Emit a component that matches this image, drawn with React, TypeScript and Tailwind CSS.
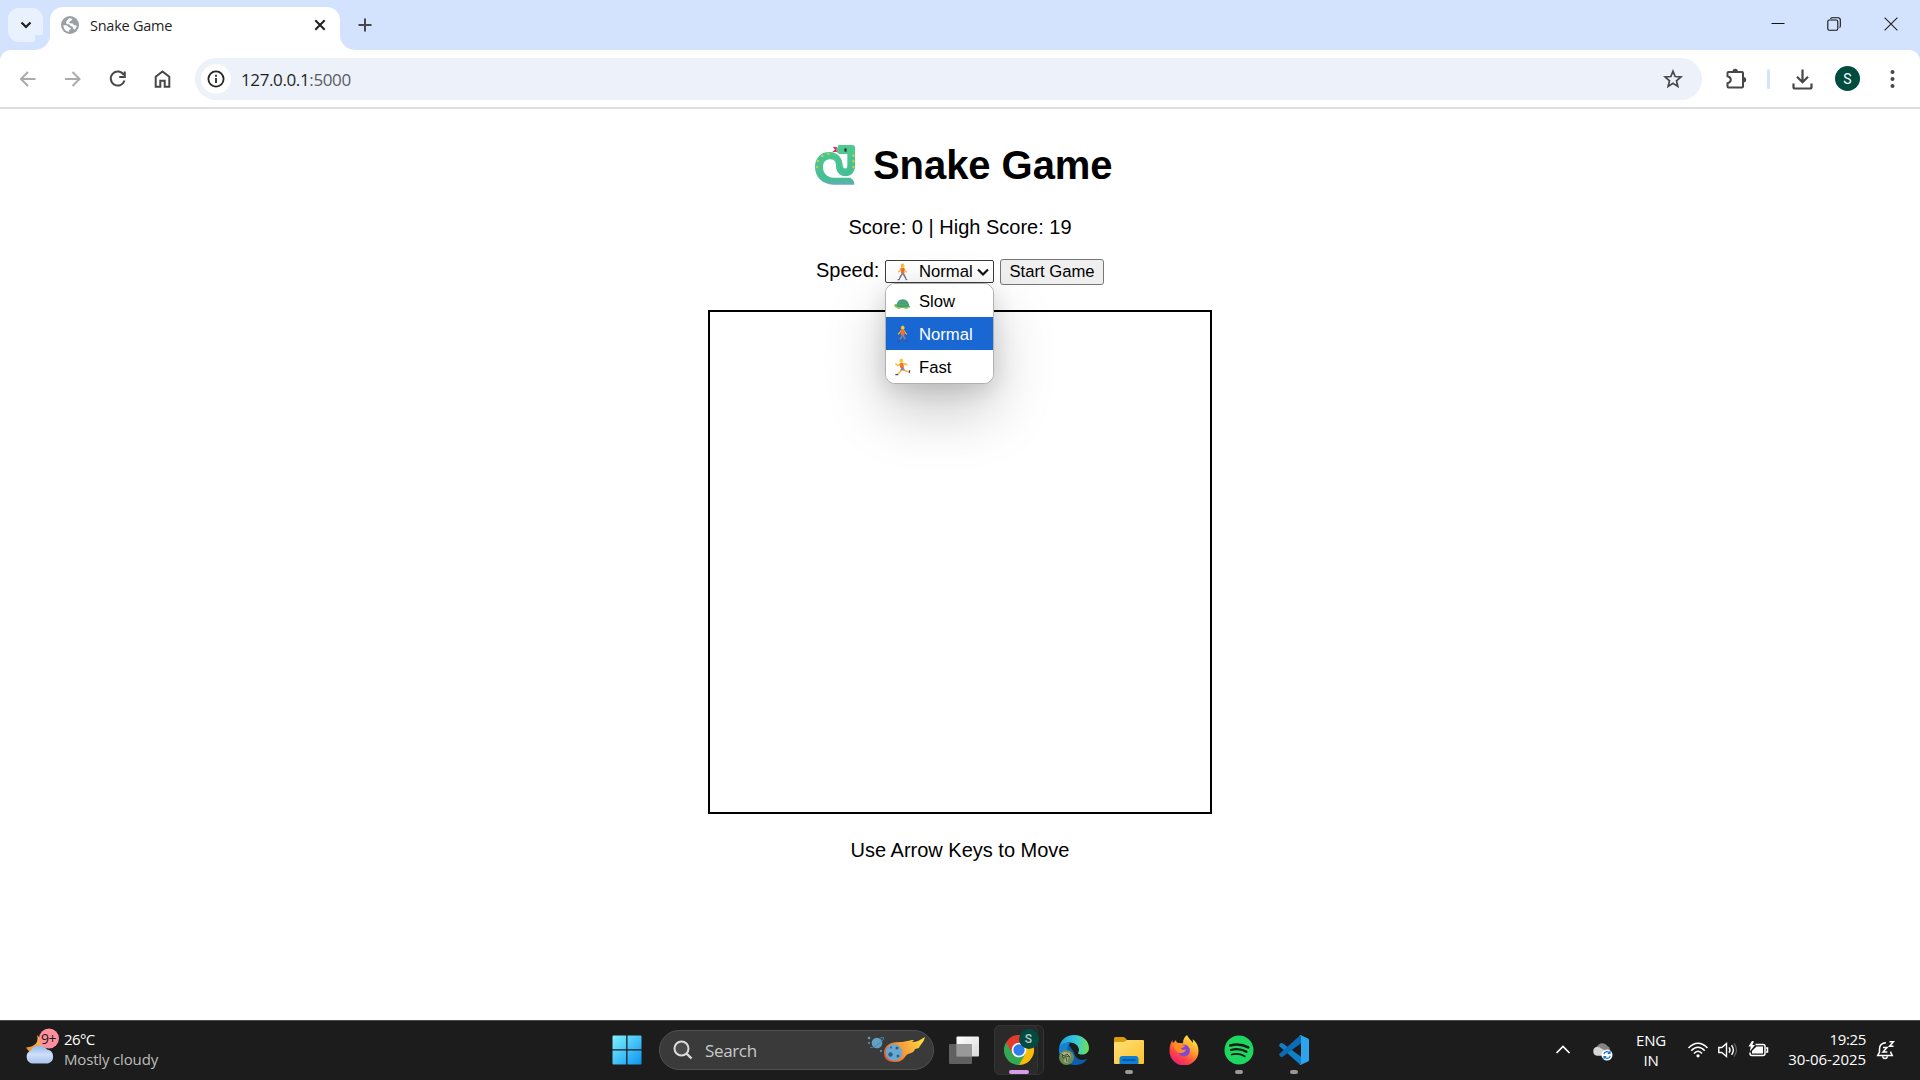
import React from "react";

const ARIAL = "font-['Liberation_Sans',Arial,sans-serif]";
const UI = "font-['Open_Sans','Noto_Sans',sans-serif]";

function Globe() {
  return (
    <svg className="h-[18px] w-[18px] shrink-0" viewBox="0 0 18 18">
      <circle cx="9" cy="9" r="9" fill="#9aa0a6" />
      <path d="M2.200 9.200h2.600q1.500 0 2.200 1.200.6 1 2 1 .9.200.7 1.200l-.3 1-1.300.4v1.800Q3 15.500 2.200 9.200z" fill="#fff" />
      <path d="M8.200 2.200q2 .2 3.200.8l-.6 1.300-2 .9-.6 1.500 1.800.8h2l.8 1.800h2l1 .5q-.3 2.300-2 3.600l-1.600-.5-.5-2.200-2.200-1-1.500-1.500H6l-1-1.400 1-2.300z" fill="#fff" />
    </svg>
  );
}

function ToolIcon({ children, color = "#474747" }: { children: React.ReactNode; color?: string }) {
  return (
    <div className="flex w-[45px] shrink-0 justify-center">
      <svg className="h-6 w-6" viewBox="0 0 24 24" fill="none" stroke={color} strokeWidth="2">
        {children}
      </svg>
    </div>
  );
}

function TitleBar() {
  return (
    <div className="flex h-[50px] items-end bg-[#d3e3fd] pl-2">
      <div className="mb-2 flex h-[34px] w-[35px] items-center justify-center rounded-[11px] bg-[#e9f1fe]">
        <svg className="h-3 w-3" viewBox="0 0 12 12" fill="none" stroke="#1f1f1f" strokeWidth="2.200">
          <path d="M1.500 3.500L6 8l4.500-4.500" />
        </svg>
      </div>
      <div className="relative ml-[7px] flex h-[43px] w-[290px] items-center rounded-t-[13px] bg-white pb-[7px] pl-[11px] pr-[14px]">
        <div className="absolute -left-[15px] bottom-0 h-[15px] w-[15px] bg-white">
          <div className="h-full w-full rounded-br-[15px] bg-[#d3e3fd]" />
        </div>
        <div className="absolute -right-[15px] bottom-0 h-[15px] w-[15px] bg-white">
          <div className="h-full w-full rounded-bl-[15px] bg-[#d3e3fd]" />
        </div>
        <Globe />
        <span className="ml-[11px] flex-1 pt-[2px] text-[14.500px] leading-5 tracking-[-0.250px] text-[#1f1f1f]">Snake Game</span>
        <svg className="h-3 w-3" viewBox="0 0 12 12" stroke="#1f1f1f" strokeWidth="2">
          <path d="M1.300 1.300l9.400 9.400M10.700 1.300l-9.400 9.400" />
        </svg>
      </div>
      <svg className="mb-[18px] ml-[18px] h-[14px] w-[14px]" viewBox="0 0 14 14" stroke="#474747" strokeWidth="2">
        <path d="M7 .5v13M.5 7h13" />
      </svg>
      <div className="ml-auto flex h-full items-center pb-[2px]">
        <div className="flex w-[56px] justify-center">
          <svg className="h-[14px] w-[14px]" viewBox="0 0 14 14">
            <path d="M.5 6.500h13" stroke="#111" />
          </svg>
        </div>
        <div className="flex w-[56px] justify-center">
          <svg className="h-[14px] w-[14px]" viewBox="0 0 14 14" fill="none" stroke="#111" strokeWidth="1.100">
            <rect x=".8" y="3" width="10" height="10.300" rx="1.500" />
            <path d="M3.500 1.700Q4 .7 5.200.7H11q2.300 0 2.300 2.300v6q0 1-.8 1.600" />
          </svg>
        </div>
        <div className="flex w-[58px] justify-center">
          <svg className="h-[14px] w-[14px]" viewBox="0 0 14 14" stroke="#222" strokeWidth="1.100">
            <path d="M.6.6l12.800 12.800M13.400.6L.6 13.400" />
          </svg>
        </div>
      </div>
    </div>
  );
}

function Toolbar() {
  return (
    <div className="bg-[#d3e3fd]">
      <div className="flex h-[59px] items-center rounded-t-[11px] border-b-2 border-[#dedede] bg-white pl-[5px]">
        <ToolIcon color="#ababab">
          <path d="M19.500 12H5.500M12 5l-7 7 7 7" />
        </ToolIcon>
        <ToolIcon color="#ababab">
          <path d="M4 12h14M11.500 5l7 7-7 7" />
        </ToolIcon>
        <ToolIcon>
          <path d="M17.800 8A7 7 0 1 0 18.500 13.500M18.800 4.500V10h-5.600" />
        </ToolIcon>
        <ToolIcon>
          <path d="M4.700 19.800V9.800L11.500 4.500l6.800 5.300v10h-4.600v-6H9.300v6z" />
        </ToolIcon>
        <div className="ml-[10px] flex h-[42px] w-[1507px] items-center rounded-full bg-[#ecf1fa] pl-[6px] pr-[19px]">
          <div className="flex h-[30px] w-[30px] items-center justify-center rounded-full bg-white">
            <svg className="h-[18px] w-[18px]" viewBox="0 0 18 18" fill="none" stroke="#262626" strokeWidth="1.800">
              <circle cx="9" cy="9" r="7.600" />
              <path d="M9 8v5M9 4.800v1.900" />
            </svg>
          </div>
          <span className="ml-[10px] flex-1 pt-[2px] text-[17px] tracking-[-0.380px] text-[#1f1f1f]">
            127.0.0.1<span className="text-[#5a5d61]">:5000</span>
          </span>
          <svg className="h-[20px] w-[20px]" viewBox="0 0 20 20" fill="none" stroke="#474747" strokeWidth="1.700">
            <path d="M10 2.200l2.150 5.350 5.750.45-4.400 3.750 1.350 5.600L10 14.350 5.150 17.350l1.350-5.600L2.100 8l5.750-.45z" />
          </svg>
        </div>
        <svg className="ml-[23px] h-[22px] w-[22px]" viewBox="0 0 22 22" fill="none" stroke="#474747" strokeWidth="2">
          <path d="M3.500 4H17q1 0 1 1v13.500q0 1-1 1H3.500q-1 0-1-1v-3.300q3.300-.7 3.300-3.400T2.500 8.300V5q0-1 1-1z" />
          <path d="M7.500 3.500a2.700 2.700 0 0 1 5.400 0zM18.500 9a2.700 2.700 0 0 1 0 5.400z" fill="#474747" stroke="none" />
        </svg>
        <div className="ml-5 h-5 w-[3px] rounded-full bg-[#d3e3fd]" />
        <svg className="ml-[21px] h-[22px] w-[22px]" viewBox="0 0 22 22" fill="none" stroke="#474747" strokeWidth="2.200">
          <path d="M11.500 1.500V14M6 8.800l5.500 5.500L17 8.800M2.500 15.500V19q0 1.500 1.500 1.500h15q1.500 0 1.500-1.500v-3.500" />
        </svg>
        <div className="ml-[22px] flex h-[25px] w-[25px] items-center justify-center rounded-full bg-[#004d40] font-['Roboto',sans-serif] text-[14px] leading-none text-white">
          S
        </div>
        <svg className="ml-[29px] h-5 w-[6px]" viewBox="0 0 6 20" fill="#474747">
          <circle cx="3.500" cy="3" r="2" />
          <circle cx="3.500" cy="10" r="2" />
          <circle cx="3.500" cy="17" r="2" />
        </svg>
      </div>
    </div>
  );
}

function SnakeEmoji() {
  return (
    <svg className="h-10 w-10 shrink-0" viewBox="0 0 120 120" fill="none">
      <defs>
        <linearGradient id="snake" x1="60" y1="0" x2="60" y2="120" gradientUnits="userSpaceOnUse">
          <stop offset="0" stopColor="#4fcb8d" />
          <stop offset=".88" stopColor="#46bd97" />
          <stop offset="1" stopColor="#6da5c5" />
        </linearGradient>
      </defs>
      <path d="M66 9l-8-1 5 6-6 5 10-1 8 4" stroke="#e0245e" strokeWidth="4" />
      <path
        d="M70 0H112Q120 0 120 8V64C120 82 108 94 92 94C74 94 63 80 63 64C63 52 59 42 44 43C31 44 24 53 24 66C24 84 36 98 55 98H106Q119 106 118 119H55C21 118 0 95 0 66C0 39 18 20 44 21C69 22 82 39 83 60C84 75 97 73 97 62V27H78C67 27 63 20 66 12Z"
        fill="url(#snake)"
      />
      <path d="M9 65C9 43 23 31 44 31C65 32 72 45 73 62C75 79 84 84 92 84C103 84 109 75 109 63V20" stroke="#2fae8d" strokeWidth="5" opacity=".15" />
      <rect x="88" y="10" width="7" height="10" rx="2" fill="#3b3146" />
      <g fill="#b9cf4b">
        <circle cx="40" cy="27" r="4" />
        <circle cx="22" cy="33" r="4" />
        <circle cx="9" cy="48" r="4" />
        <circle cx="6" cy="66" r="4" />
        <circle cx="115" cy="32" r="4" />
        <circle cx="115" cy="49" r="4" />
        <circle cx="115" cy="66" r="4" />
      </g>
    </svg>
  );
}

function Walker() {
  return (
    <svg className="h-[18px] w-[18px] shrink-0" viewBox="0 0 18 18" fill="none" strokeLinecap="round">
      <path d="M7.200 14.200L6.300 16.700H5M12.200 14l.9 2.600h.7" stroke="#5a4576" strokeWidth="1" />
      <path d="M9.200 10.500L8.300 12.500 7.200 14M10.200 10.500l.8 1.500 1 1.800" stroke="#858395" strokeWidth="1.600" />
      <path d="M7.800 6L6.800 7.800 5.300 9M11.500 6l.8 2 1.300 1" stroke="#fdb92f" strokeWidth="1.100" />
      <path d="M8.200 5.300h2.700l.1 4.400H8.500z" fill="#f4702b" stroke="#f4702b" strokeWidth="1.100" strokeLinejoin="round" />
      <rect x="8" y=".8" width="3.400" height="3.900" rx="1.500" fill="#ffc43a" />
      <path d="M8.300 3.500V2q.3-1 1.600-1" stroke="#f3a21c" strokeWidth=".9" />
    </svg>
  );
}

function Runner() {
  return (
    <svg className="h-[18px] w-[18px] shrink-0" viewBox="0 0 18 18" fill="none" strokeLinecap="round">
      <path d="M8.500 11.500L6.800 14.300 4.800 16M11 12l2.500 1.200 2.300.2" stroke="#fdb92f" strokeWidth="1.500" />
      <path d="M2.800 16.700h2M16.700 12.500l-.4 2.200" stroke="#5a4576" strokeWidth="1.200" />
      <path d="M7 6.500L4.500 7.500 2.800 6M10 6l2.300-.3 1.700 1.300" stroke="#fdb92f" strokeWidth="1.400" />
      <path d="M7.500 5.500h2.200l.8 4H8z" fill="#f4702b" stroke="#f4702b" strokeWidth="1" strokeLinejoin="round" />
      <path d="M8 9.800h3l.8 2.700H7.500z" fill="#8f8ba3" />
      <rect x="6.500" y=".8" width="3.600" height="3.900" rx="1.600" fill="#ffc43a" />
    </svg>
  );
}

function Turtle() {
  return (
    <svg className="h-[18px] w-[18px] shrink-0" viewBox="0 0 18 18">
      <path d="M1.200 13.500q.3-1.900 2.200-1.700L5 14h11.300q1 .2.900 1l-.4.800H15l-.2 1h-3.200l-.4-.8H7.500l-.4.800H4.300l.1-1.200Q1.200 16 1.200 13.500z" fill="#8cc152" />
      <path d="M3.300 14.500Q4 7.300 9.700 7.300T16.500 14.500q-6.600 1.500-13.200 0z" fill="#3f9c86" />
      <path d="M7 10.200h5.400l1.500 2.600H5.600z" fill="none" stroke="#5eb24d" strokeWidth=".9" />
    </svg>
  );
}

function SpeedRow() {
  const options = [
    { icon: <Turtle />, label: "Slow", cls: "bg-white text-black" },
    { icon: <Walker />, label: "Normal", cls: "bg-[#1967d2] text-white" },
    { icon: <Runner />, label: "Fast", cls: "bg-white text-black" },
  ];
  return (
    <div className="mt-5 flex h-[26px] w-[288px] items-center">
      <span className="mr-[6px] w-[63px] whitespace-nowrap pb-[3px] text-[20px] leading-[23px]">Speed:</span>
      <div className="relative -mt-px h-[23px] w-[109px] shrink-0 rounded-[2px] border border-[#3c3c3c] bg-white">
        <div className="flex h-full items-center pl-[7px]">
          <Walker />
          <span className="ml-2 text-[16.670px] leading-[21px]">Normal</span>
          <svg className="ml-1 h-3 w-3" viewBox="0 0 12 12" fill="none" stroke="#111" strokeWidth="2.200">
            <path d="M1 3.500l5 5 5-5" />
          </svg>
        </div>
        <div className="absolute -left-px top-[22px] z-10 w-[109px] rounded-[10px] border border-[#b0b0b0] bg-white shadow-[0_26px_60px_rgba(0,0,0,0.22),0_6px_22px_rgba(0,0,0,0.12)]">
          {options.map((o) => (
            <div key={o.label} className={`flex h-[33px] items-center pl-[7px] first:rounded-t-[9px] last:rounded-b-[9px] ${o.cls}`}>
              {o.icon}
              <span className="ml-2 pt-[3px] text-[16.670px] leading-5">{o.label}</span>
            </div>
          ))}
        </div>
      </div>
      <div className="ml-[6px] flex h-[26px] w-[104px] shrink-0 items-center justify-center whitespace-nowrap rounded-[3px] border border-[#767676] bg-[#efefef] text-[16.670px] leading-5">
        Start Game
      </div>
    </div>
  );
}

function Page() {
  return (
    <div className={`flex h-[911px] flex-col items-center bg-white text-black ${ARIAL}`}>
      <div className="mt-[33px] flex h-[46px] w-[292px] items-center gap-[18px] pl-px">
        <SnakeEmoji />
        <h1 className="whitespace-nowrap text-[40px] font-bold leading-[46px] tracking-[-0.060px]">Snake Game</h1>
      </div>
      <p className="mt-[28px] text-[20px] leading-[23px]">Score: 0 | High Score: 19</p>
      <SpeedRow />
      <div className="mt-[25px] h-[504px] w-[504px] border-2 border-black" />
      <p className="mt-[25px] text-[20px] leading-[23px]">Use Arrow Keys to Move</p>
    </div>
  );
}

function Weather() {
  return (
    <div className="-mt-[5px] flex w-[599px] items-center pl-[24px]">
      <svg className="h-10 w-[38px]" viewBox="0 0 38 40">
        <defs>
          <linearGradient id="cloud" x1="0" y1="0" x2="0" y2="1">
            <stop offset="0" stopColor="#8fb6f3" />
            <stop offset=".5" stopColor="#cfdff8" />
            <stop offset="1" stopColor="#a8c4ee" />
          </linearGradient>
          <linearGradient id="moon" x1="0" y1="1" x2="1" y2="0">
            <stop offset="0" stopColor="#f08a24" />
            <stop offset="1" stopColor="#ffc54a" />
          </linearGradient>
        </defs>
        <path d="M13 7q3 11-11 12.500Q6 26 12 25t10-8z" fill="url(#moon)" />
        <path d="M8 35.500a7 7 0 0 1-1-13.300 9 8 0 0 1 16-.7 7.200 7.200 0 0 1 1 14z" fill="url(#cloud)" />
        <circle cx="25" cy="10.500" r="10" fill="#ff8f9c" />
        <text x="24.500" y="15.500" textAnchor="middle" fontSize="14" fill="#1b1b1b" fontFamily="Open Sans" letterSpacing="-.5">9+</text>
      </svg>
      <div className="ml-[2px] pt-px text-[15px] leading-5">
        <div className="tracking-[-0.600px] text-white">26°C</div>
        <div className="tracking-[-0.160px] text-[#bdbdbd]">Mostly cloudy</div>
      </div>
    </div>
  );
}

function WindowsLogo() {
  return (
    <svg className="h-[30px] w-[30px]" viewBox="0 0 30 30">
      <defs>
        <linearGradient id="win" x1="0" y1="0" x2="1" y2="1">
          <stop offset="0" stopColor="#7ef3ff" />
          <stop offset="1" stopColor="#0c93f2" />
        </linearGradient>
      </defs>
      <path d="M1.500.5H14.200V14.200H.5V1.500Q.5.500 1.500.5zM15.500.5H28.500Q29.500.5 29.500 1.500V14.200H15.500zM.5 15.500H14.200V29.500H1.500Q.5 29.500.5 28.500zM15.500 15.500H29.500V28.500Q29.500 29.500 28.500 29.500H15.500z" fill="url(#win)" />
    </svg>
  );
}

function Comet() {
  return (
    <svg className="h-[28px] w-[58px]" viewBox="0 0 58 28">
      <defs>
        <linearGradient id="flame" x1="18" y1="25" x2="57" y2="2" gradientUnits="userSpaceOnUse">
          <stop offset="0" stopColor="#e8502f" />
          <stop offset=".5" stopColor="#f7a03c" />
          <stop offset="1" stopColor="#ffe03a" />
        </linearGradient>
      </defs>
      <circle cx="10" cy="7" r="5.300" fill="#62a0c6" />
      <path d="M3 11Q4 13 10 9T17 2q-.5-1.500-4 .3" fill="none" stroke="#4688b0" strokeWidth="1" />
      <circle cx="2" cy="2" r="1.300" fill="#5f9cc0" />
      <circle cx="2" cy="7" r="1" fill="#5f9cc0" />
      <circle cx="14" cy="15" r="1.100" fill="#5f9cc0" />
      <path d="M17 17C17 9 24 6 33 6 39 6 42 4 47 4l-2 2c5 0 8-2 13-5-1 5-5 8-6 11l-4 1c-1 3-3 4-7 5-3 1-4 8-13 8-7 0-11-3-11-9z" fill="url(#flame)" />
      <circle cx="27" cy="16.500" r="8.300" fill="#67a9d2" />
      <g fill="#315b82">
        <circle cx="23.500" cy="18.500" r="2.200" />
        <circle cx="30" cy="12" r="1.500" />
        <circle cx="31" cy="20" r="1.500" />
        <circle cx="24" cy="11.500" r="1" />
      </g>
    </svg>
  );
}

function Chrome() {
  return (
    <svg className="h-[30px] w-[30px]" viewBox="0 0 30 30">
      <path d="M15 15L28 7.500A15 15 0 0 1 15 30z" fill="#fbbc05" />
      <path d="M15 15l6.500 3.700L15 30A15 15 0 0 1 2 7.500z" fill="#34a853" />
      <path d="M2 7.500A15 15 0 0 1 28 7.500H15v7.500l-6.500 3.800z" fill="#e33b2e" />
      <circle cx="15" cy="15" r="7.300" fill="#fff" />
      <circle cx="15" cy="15" r="5.700" fill="#2f7de9" />
    </svg>
  );
}

function Edge() {
  return (
    <svg className="h-[30px] w-[30px]" viewBox="0 0 30 30">
      <defs>
        <linearGradient id="edgeTop" x1="0" y1="10" x2="30" y2="12" gradientUnits="userSpaceOnUse">
          <stop offset="0" stopColor="#1b9de2" />
          <stop offset=".55" stopColor="#35c8dc" />
          <stop offset="1" stopColor="#6fe052" />
        </linearGradient>
      </defs>
      <path d="M0 14C1 23 7 30 16 30c5 0 10-2 12.500-6.500-5 3-12 1.500-13.500-6L10 10z" fill="#0b5fae" />
      <path d="M0 14C1 9 6 7 11 8c-4 4-5 13 2 18-7 2-14-5-13-12z" fill="#1583d1" />
      <path d="M0 14C1 5 7 0 15 0c9 0 15 6 15 13 0 6-6 7.500-10 6-2-.7 0-1.500 0-4 0-4-4-7.500-9.500-7.500C5 7.500 1 10 0 14z" fill="url(#edgeTop)" />
      <circle cx="7.500" cy="22.500" r="7.500" fill="#668b54" />
      <path d="M2 20q2-4 5-3l4 1 1 4-3 1-5-1zM5 27l1-4h3v5z" fill="#b4a986" />
      <path d="M3 19l2 2 3-2 3 3-4-1-3 2zM7 22l1 5" stroke="#31552b" fill="none" />
    </svg>
  );
}

function Explorer() {
  return (
    <svg className="h-[30px] w-[30px]" viewBox="0 0 30 30">
      <defs>
        <linearGradient id="folder" x1="0" y1="0" x2="1" y2="1">
          <stop offset="0" stopColor="#ffe17a" />
          <stop offset="1" stopColor="#fdc12a" />
        </linearGradient>
      </defs>
      <path d="M0 3.500Q0 2 1.500 2H9q1.500 0 2.500 1.300L13 5v4H0z" fill="#dc9a0c" />
      <path d="M0 8Q0 7 1 7h9l3-2h16q1 0 1 1v22q0 1-1 1H1q-1 0-1-1z" fill="url(#folder)" />
      <path d="M5.500 29v-5q0-3 3-3h13q3 0 3 3v5z" fill="#0f7fd3" />
      <path d="M9 25h12" stroke="#0a4f94" strokeWidth="1.500" strokeLinecap="round" />
    </svg>
  );
}

function Firefox() {
  return (
    <svg className="h-[30px] w-[30px]" viewBox="0 0 30 30">
      <defs>
        <linearGradient id="fox" x1="24" y1="2" x2="6" y2="28" gradientUnits="userSpaceOnUse">
          <stop offset="0" stopColor="#fff04a" />
          <stop offset=".4" stopColor="#ff9a2b" />
          <stop offset=".7" stopColor="#ff4a41" />
          <stop offset="1" stopColor="#e91e78" />
        </linearGradient>
      </defs>
      <path d="M18 0c1 3 4 5 6 8 0-2 0-3-.5-4 4 3 6 7 6 12A14.500 14.500 0 0 1 .5 16c0-5 1-8 3-11 0 2 0 2 .5 3l3-3c0 2 1 3 3 3l4 .2C14 5 15 2 18 0z" fill="url(#fox)" />
      <circle cx="15" cy="15.500" r="6" fill="#8347d8" />
      <path d="M4 9c3-2 6-1 8 1l4 .5c0 2-4 2-4 3 1 2 3 1 5 1-1 4-7 5-10 1-2-2-3-4-3-6.500z" fill="#ff8d24" />
      <path d="M15 6c4-1 8 2 9 6l-4 1-1-3z" fill="#ffb52f" />
    </svg>
  );
}

function Spotify() {
  return (
    <svg className="h-[30px] w-[30px]" viewBox="0 0 30 30" fill="none" stroke="#191919" strokeLinecap="round">
      <circle cx="15" cy="15" r="14.500" fill="#1ed760" stroke="none" />
      <path d="M6.300 10.400q9.500-2.600 18 2" strokeWidth="2.600" />
      <path d="M7 15q8-2.200 15.500 1.800" strokeWidth="2.200" />
      <path d="M7.700 19.500q7-1.700 13 1.700" strokeWidth="1.800" />
    </svg>
  );
}

function VsCode() {
  return (
    <svg className="h-[30px] w-[30px]" viewBox="0 0 30 30">
      <path d="M1.300 8.600L.3 10q-.5.700.2 1.300L21.500 30l1.500-7.500L4 8.500q-1.400-1-2.700.1z" fill="#1280c9" />
      <path d="M1.300 21.400L.3 20q-.5-.7.200-1.300L21.500 0 23 7.500 4 21.500q-1.400 1-2.700-.1z" fill="#0b6cb5" />
      <path d="M21.500.1L29 3.400q1 .5 1 1.600v20q0 1.100-1 1.600l-7.500 3.300q-1 .1-1.300-.4 1.800.4 1.800-1.500V2q0-1.900-1.800-1.500.5-.5 1.300-.4z" fill="#2ea3ee" />
    </svg>
  );
}

function TaskCell({ children, running = false }: { children: React.ReactNode; running?: boolean }) {
  return (
    <div className="relative flex h-full w-[55px] items-center justify-center pb-px">
      {children}
      {running && <div className="absolute bottom-[6px] h-1 w-2 rounded-full bg-[#999]" />}
    </div>
  );
}

function Tray() {
  return (
    <div className="ml-auto flex h-full items-center pb-px pr-[25px] text-white">
      <svg className="h-[14px] w-[16px]" viewBox="0 0 16 14" fill="none" stroke="#fff" strokeWidth="1.700">
        <path d="M1.500 10L8 3.500l6.500 6.500" />
      </svg>
      <svg className="ml-[21px] mt-1 h-[18px] w-[22px]" viewBox="0 0 22 18">
        <path d="M5 12a4.500 4.500 0 0 1 0-8.500A6 6 0 0 1 15.500 3q3 1 2.500 5l-6 3z" fill="#858585" />
        <path d="M5 12.800a4.500 4.500 0 0 1-.3-8.800q3-.5 5.300 2l4 2-1 4.800z" fill="#d6d6d6" />
        <circle cx="15" cy="12" r="5.500" fill="#fff" />
        <path d="M11.800 11.200a3.300 3.300 0 0 1 6-1M18.200 12.800a3.300 3.300 0 0 1-6 1M18 8v2.300h-2.300M12 16v-2.300h2.300" fill="none" stroke="#1473cf" strokeWidth="1.200" />
      </svg>
      <div className="-mt-px ml-[22px] w-[30px] text-center text-[15px] leading-5 tracking-[-0.200px]">
        ENG
        <br />
        IN
      </div>
      <svg className="ml-[21px] h-[18px] w-[22px]" viewBox="0 0 22 18" fill="none" stroke="#fff" strokeWidth="1.500">
        <path d="M1.500 7Q6 2.200 11 2.200T20.500 7" />
        <path d="M4.300 9.700Q7.300 6.200 11 6.200t6.700 3.500" />
        <path d="M7 12.500Q8.800 10.200 11 10.200t4 2.300" />
        <circle cx="11" cy="14.800" r="1.600" fill="#fff" stroke="none" />
      </svg>
      <svg className="ml-2 h-[18px] w-[22px]" viewBox="0 0 22 18" fill="none" stroke="#fff" strokeWidth="1.400">
        <path d="M1.800 6.500h3L9.500 2.500v13l-4.700-4h-3z" />
        <path d="M12 6.300q2 2.700 0 5.400M14.500 4.200q3.800 4.800 0 9.600" />
        <path d="M17 2.500q5 6.500 0 13" stroke="#5c5c5c" />
      </svg>
      <svg className="ml-2 h-[18px] w-[22px]" viewBox="0 0 22 18" fill="none" stroke="#fff" strokeWidth="1.500">
        <path d="M8.500 3.500H16q2 0 2 2v7q0 2-2 2H5q-2 0-2-2v-1" />
        <path d="M9.500 5.500h6.500v7H5V10z" fill="#fff" stroke="none" />
        <path d="M19 7h1.500v4H19" />
        <path d="M5 0L1.500 5.500h2.300L2.800 10.500 8 4H5.300L7 .5z" fill="#fff" stroke="none" />
      </svg>
      <div className="-mt-[3px] ml-[13px] flex w-[84px] flex-col items-end whitespace-nowrap text-[15px] leading-5">
        <div className="tracking-[-0.350px]">19:25</div>
        <div className="tracking-[-0.050px]">30-06-2025</div>
      </div>
      <svg className="-mt-px ml-[10px] h-5 w-[19px]" viewBox="0 0 19 20" fill="none" stroke="#fff" strokeWidth="1.500">
        <path d="M10 2.700Q3.500 3 3.500 9v3L1.700 15.500h14.600L14.800 12.500V11.500M6.500 16.500q.7 2 2.500 2t2.500-2" />
        <path d="M7 7.500h4l-4 4.500h4.300M13.500 1.700h4l-4 4.600h4" />
      </svg>
    </div>
  );
}

function Taskbar() {
  return (
    <div className="flex h-[60px] items-center border-t border-[#4a4a4a] bg-[#1c1c1c]">
      <Weather />
      <TaskCell>
        <WindowsLogo />
      </TaskCell>
      <div className="-mt-px ml-[5px] flex h-10 w-[275px] items-center rounded-full border border-[#515151] bg-[#3a3a3a] pl-[13px] pr-2">
        <svg className="h-5 w-5" viewBox="0 0 20 20" fill="none" stroke="#dcdcdc" strokeWidth="2">
          <circle cx="8.500" cy="8.500" r="7" fill="#4b4b4b" />
          <path d="M13.500 13.500l5 5" strokeWidth="2.400" />
        </svg>
        <span className="ml-[12px] flex-1 pt-[2px] text-[17px] tracking-[-0.350px] text-[#c9c9c9]">Search</span>
        <Comet />
      </div>
      <div className="ml-[2px] flex h-full">
        <TaskCell>
          <svg className="h-[30px] w-[30px]" viewBox="0 0 30 30">
            <defs>
              <linearGradient id="pane" x1="0" y1="0" x2="1" y2="1">
                <stop offset="0" stopColor="#fff" />
                <stop offset="1" stopColor="#d9d9d9" />
              </linearGradient>
            </defs>
            <rect x="7.500" y="1.500" width="22.500" height="20" rx="1" fill="url(#pane)" />
            <rect x="0" y="9" width="23" height="20" rx="1" fill="#6c6c6c" opacity=".85" />
            <rect x="7.500" y="9" width="15.500" height="12.500" fill="#999" />
          </svg>
        </TaskCell>
        <TaskCell>
          <div className="absolute left-[3px] top-[4px] h-[50px] w-[50px] rounded-[6px] border border-[#343434] bg-[#242424]" />
          <div className="absolute left-[3px] top-[4px] h-[50px] w-[44px] rounded-[6px] border border-[#343434] bg-[#2a2a2a]" />
          <div className="relative">
            <Chrome />
            <div className="absolute -top-[6px] left-[15px] flex h-5 w-5 items-center justify-center rounded-full bg-[#034b40] font-['Roboto',sans-serif] text-[12px] font-medium leading-none text-[#b5cdc9]">
              S
            </div>
          </div>
          <div className="absolute bottom-[6px] h-1 w-5 rounded-full bg-[#d79ce6]" />
        </TaskCell>
        <TaskCell>
          <Edge />
        </TaskCell>
        <TaskCell running>
          <Explorer />
        </TaskCell>
        <TaskCell>
          <Firefox />
        </TaskCell>
        <TaskCell running>
          <Spotify />
        </TaskCell>
        <TaskCell running>
          <VsCode />
        </TaskCell>
      </div>
      <Tray />
    </div>
  );
}

export default function App() {
  return (
    <div className={`h-[1080px] w-[1920px] overflow-hidden bg-white ${UI}`}>
      <TitleBar />
      <Toolbar />
      <Page />
      <Taskbar />
    </div>
  );
}
